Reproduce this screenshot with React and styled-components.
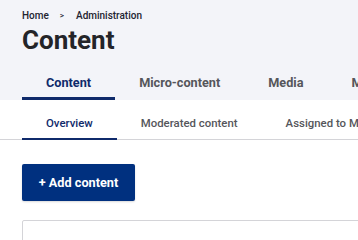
import React from "react";
import styled, { createGlobalStyle } from "styled-components";

const GlobalStyle = createGlobalStyle`
  html, body {
    margin: 0;
    padding: 0;
    background: #ffffff;
    overflow: hidden;
  }
  body {
    font-family: Roboto, "Liberation Sans", Arial, sans-serif;
    color: #232429;
  }
`;

const Page = styled.div`
  width: 460px;
`;

const Header = styled.header`
  background: #f3f4f9;
  padding: 9px 0 0 22px;
`;

const Breadcrumb = styled.nav`
  display: flex;
  align-items: center;
  font-size: 10px;
  font-weight: 500;
  line-height: 13px;
  color: #222330;
`;

const Sep = styled.span`
  font-size: 8px;
  margin: 0 12px 0 11px;
`;

const Title = styled.h1`
  margin: 3px 0 0;
  font-size: 26px;
  font-weight: 700;
  line-height: 30px;
  color: #232429;
`;

const TabRow = styled.div`
  display: flex;
  border-bottom: ${p => (p.$secondary ? "1px solid #d4d4d8" : "none")};
  margin-top: ${p => (p.$secondary ? "0" : "10px")};
  padding-left: ${p => (p.$secondary ? "22px" : "0")};
`;

const Tab = styled.div`
  position: relative;
  flex: none;
  padding: ${p => (p.$secondary ? "0 24px 8px" : "0 24px")};
  height: ${p => (p.$secondary ? "39px" : "35px")};
  box-sizing: border-box;
  display: flex;
  align-items: ${p => (p.$secondary ? "flex-end" : "center")};
  white-space: nowrap;
  line-height: 15px;
  font-size: ${p => (p.$secondary ? "11.4px" : "12.7px")};
  font-weight: ${p => (p.$secondary ? 500 : 700)};
  color: ${p => (p.$active ? "#0f2a6b" : "#55565b")};

  &::after {
    content: "";
    display: ${p => (p.$active ? "block" : "none")};
    position: absolute;
    left: 0;
    right: 0;
    bottom: ${p => (p.$secondary ? "-1px" : "0")};
    height: ${p => (p.$secondary ? "2px" : "3px")};
    background: #0f2a6b;
  }
`;

const Main = styled.main`
  padding: 24px 0 0 22px;
`;

const PrimaryButton = styled.button`
  display: block;
  width: 113px;
  height: 37px;
  border: none;
  border-radius: 2px;
  background: #00307f;
  color: #ffffff;
  font-family: inherit;
  font-size: 12.7px;
  font-weight: 700;
  box-shadow: 0 1px 2px rgba(0, 0, 0, 0.15);
  cursor: pointer;
`;

const Card = styled.div`
  margin-top: 19px;
  height: 60px;
  border: 1px solid #d4d4d8;
  border-radius: 2px;
  background: #ffffff;
`;

export default function App() {
  const primary = ["Content", "Micro-content", "Media", "Media library"];
  const secondary = ["Overview", "Moderated content", "Assigned to Me"];
  return (
    <Page>
      <GlobalStyle />
      <Header>
        <Breadcrumb>
          <span>Home</span>
          <Sep>&gt;</Sep>
          <span>Administration</span>
        </Breadcrumb>
        <Title>Content</Title>
        <TabRow>
          {primary.map((t, i) => (
            <Tab key={t} $active={i === 0}>
              {t}
            </Tab>
          ))}
        </TabRow>
      </Header>
      <TabRow $secondary>
        {secondary.map((t, i) => (
          <Tab key={t} $secondary $active={i === 0}>
            {t}
          </Tab>
        ))}
      </TabRow>
      <Main>
        <PrimaryButton>+ Add content</PrimaryButton>
        <Card />
      </Main>
    </Page>
  );
}
